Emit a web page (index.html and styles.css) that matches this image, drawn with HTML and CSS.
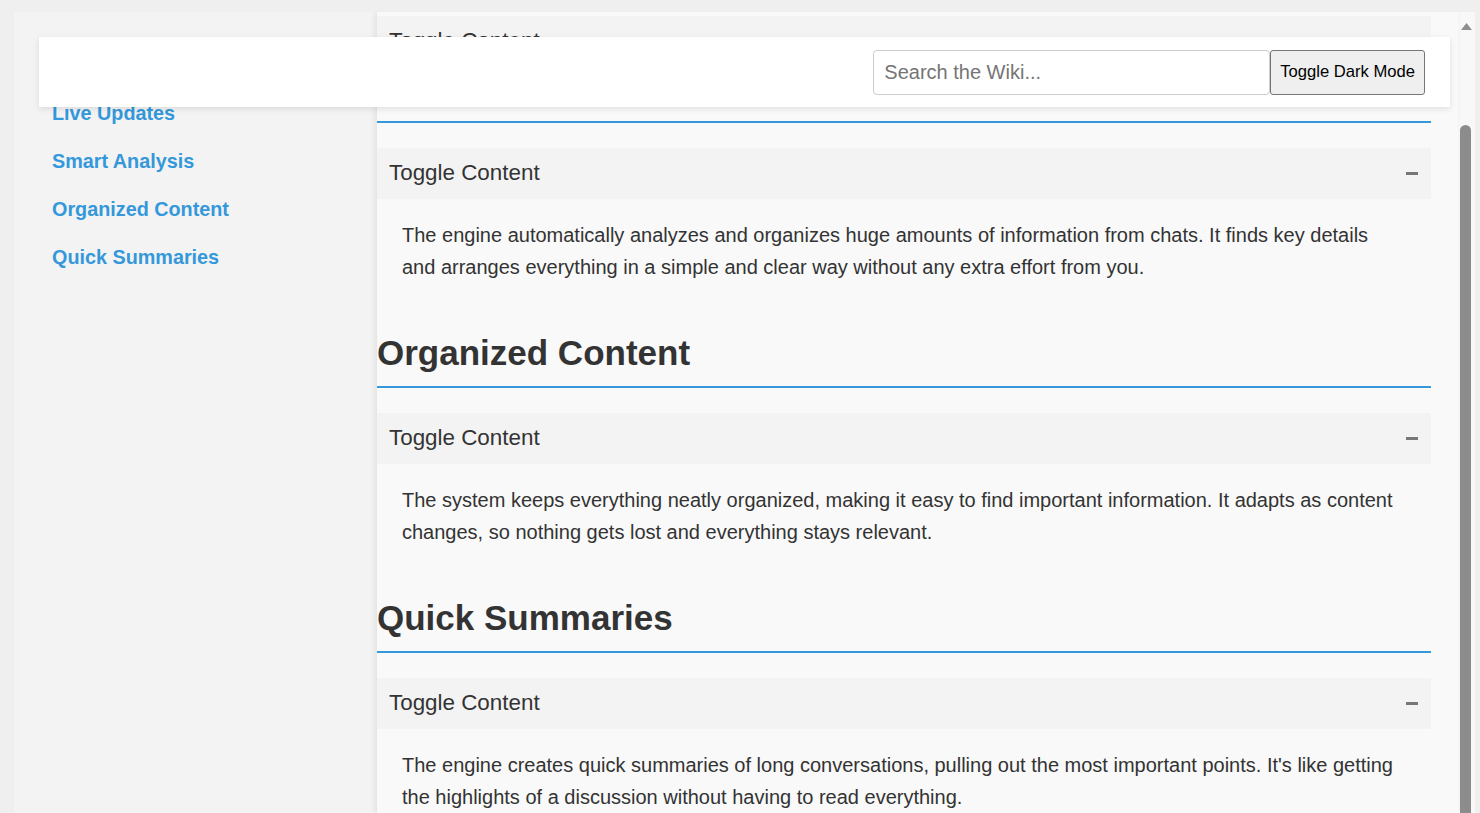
FILE: index.html
```html
<!DOCTYPE html>
<html lang="en">
<head>
<meta charset="utf-8">
<title>Wiki</title>
<link rel="stylesheet" href="styles.css">
</head>
<body>
<header class="topbar">
  <input class="search" type="text" placeholder="Search the Wiki...">
  <button class="mode-btn" type="button">Toggle Dark Mode</button>
</header>
<div class="page">
  <aside class="sidebar">
    <ul class="nav">
      <li><a href="#live">Live Updates</a></li>
      <li><a href="#smart">Smart Analysis</a></li>
      <li><a href="#organized">Organized Content</a></li>
      <li><a href="#quick">Quick Summaries</a></li>
    </ul>
  </aside>
  <main class="main">
    <section class="section collapsed" id="live">
      <div class="toggle"><span>Toggle Content</span><span class="minus"></span></div>
    </section>
    <section class="section" id="smart">
      <h2 class="title">Smart Analysis</h2>
      <div class="toggle"><span>Toggle Content</span><span class="minus"></span></div>
      <p class="content">The engine automatically analyzes and organizes huge amounts of information from chats. It finds key details and arranges everything in a simple and clear way without any extra effort from you.</p>
    </section>
    <section class="section" id="organized">
      <h2 class="title">Organized Content</h2>
      <div class="toggle"><span>Toggle Content</span><span class="minus"></span></div>
      <p class="content">The system keeps everything neatly organized, making it easy to find important information. It adapts as content changes, so nothing gets lost and everything stays relevant.</p>
    </section>
    <section class="section" id="quick">
      <h2 class="title">Quick Summaries</h2>
      <div class="toggle"><span>Toggle Content</span><span class="minus"></span></div>
      <p class="content">The engine creates quick summaries of long conversations, pulling out the most important points. It's like getting the highlights of a discussion without having to read everything.</p>
    </section>
  </main>
  <div class="scrollbar">
    <svg class="arrow" width="11" height="7" viewBox="0 0 11 7"><polygon points="5.5,0 11,7 0,7" fill="#8f8f8f"/></svg>
    <div class="thumb"></div>
  </div>
</div>
</body>
</html>
```
FILE: styles.css
```css
html, body {
  margin: 0;
  height: 813px;
  overflow: hidden;
}
body {
  background: #efefef;
  font-family: "Liberation Sans", Arial, sans-serif;
  color: #333;
}
.topbar {
  position: fixed;
  top: 37px;
  left: 39px;
  right: 30px;
  height: 70px;
  background: #fff;
  box-shadow: 0 2px 6px rgba(0, 0, 0, 0.1);
  display: flex;
  justify-content: flex-end;
  align-items: center;
  padding: 0 25px;
  box-sizing: border-box;
  z-index: 10;
}
.search {
  width: 397px;
  height: 45px;
  box-sizing: border-box;
  border: 1px solid #ccc;
  border-radius: 4px;
  padding: 0 10px;
  font-family: "Liberation Sans", Arial, sans-serif;
  font-size: 20px;
  color: #333;
  background: #fff;
  outline: none;
}
.search::placeholder {
  color: #757575;
}
.mode-btn {
  height: 45px;
  box-sizing: border-box;
  padding: 0 9px;
  background: #efefef;
  border: 1px solid #767676;
  border-radius: 3px;
  font-family: "Liberation Sans", Arial, sans-serif;
  font-size: 16.6px;
  color: #000;
}
.page {
  display: flex;
  margin: 12px 5px 0 14px;
  height: 801px;
  overflow: hidden;
}
.sidebar {
  width: 363px;
  flex: none;
  background: #f3f3f3;
  padding: 90px 0 0 38px;
  box-sizing: border-box;
}
.nav {
  list-style: none;
  margin: 0;
  padding: 0;
  display: flex;
  flex-direction: column;
  gap: 25px;
}
.nav a {
  display: block;
  font-size: 19.8px;
  line-height: 23px;
  font-weight: bold;
  color: #3498db;
  text-decoration: none;
}
.main {
  flex: 1;
  min-width: 0;
  background: #f9f9f9;
  padding: 4px 27px 0 0;
  box-shadow: -2px 0 6px rgba(0, 0, 0, 0.08);
  position: relative;
}
.section {
  margin: 0;
}
.title {
  margin: 0;
  font-size: 35px;
  line-height: 41px;
  font-weight: bold;
  color: #333;
  padding-bottom: 13px;
  border-bottom: 2px solid #3498db;
}
.toggle {
  display: flex;
  justify-content: space-between;
  align-items: center;
  background: #f3f3f3;
  padding: 11px 13px 13px 12px;
  font-size: 22.4px;
  line-height: 27px;
  color: #333;
}
.title + .toggle {
  margin-top: 25px;
}
.minus {
  width: 12px;
  height: 3px;
  background: #777;
  margin-top: 2px;
}
.content {
  margin: 0 0 29px;
  padding: 20px 25px;
  font-size: 20px;
  line-height: 32px;
  color: #333;
}
.scrollbar {
  width: 17px;
  flex: none;
  background: #f8f8f8;
  display: flex;
  flex-direction: column;
  align-items: flex-start;
  padding: 11px 0 0 2px;
  box-sizing: border-box;
}
.arrow {
  display: block;
  flex: none;
  margin-left: 1px;
}
.thumb {
  margin-top: 95px;
  width: 11px;
  height: 900px;
  flex: none;
  background: #8c8c8c;
  border-radius: 6px;
}
```
